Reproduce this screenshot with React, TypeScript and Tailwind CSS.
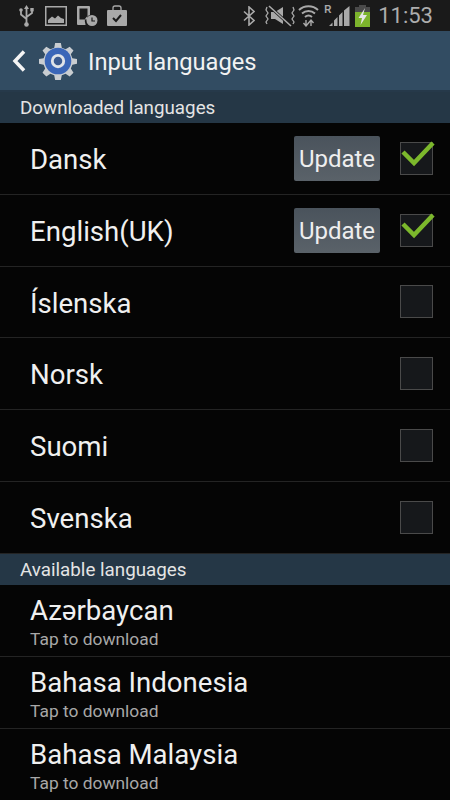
import React from 'react';

const downloaded = [
  { name: 'Dansk', update: true, checked: true },
  { name: 'English(UK)', update: true, checked: true },
  { name: 'Íslenska', update: false, checked: false },
  { name: 'Norsk', update: false, checked: false },
  { name: 'Suomi', update: false, checked: false },
  { name: 'Svenska', update: false, checked: false },
];

const available = ['Azərbaycan', 'Bahasa Indonesia', 'Bahasa Malaysia'];

function StatusBar() {
  return (
    <div className="flex h-[31px] items-center justify-between bg-[#1a1a1a] pl-[19px] pr-[17px]">
      <div className="flex items-center">
        {/* usb */}
        <svg width="15" height="22" viewBox="0 0 15 22" fill="none" stroke="#a9a9a9" strokeWidth="1.8">
          <path d="M7.500 2v17M2 6v3.500l5.500 4.500M13 5v3l-5.500 4" />
          <path d="M7.500 0l2.500 4H5z" fill="#a9a9a9" stroke="none" />
          <circle cx="7.500" cy="19.500" r="2.300" fill="#a9a9a9" stroke="none" />
          <circle cx="2" cy="5" r="1.800" fill="#a9a9a9" stroke="none" />
          <rect x="11.300" y="3" width="3.400" height="3.400" fill="#a9a9a9" stroke="none" />
        </svg>
        {/* picture */}
        <svg width="22" height="20" viewBox="0 0 22 20" className="ml-[11px]">
          <rect x="0.750" y="0.750" width="20.500" height="18.500" fill="none" stroke="#a9a9a9" strokeWidth="1.500" />
          <path d="M3 17v-3l4-3.500 3 2 3-3 3 2.500 3 1V17z" fill="#a9a9a9" />
        </svg>
        {/* phone with clock */}
        <svg width="21" height="20" viewBox="0 0 21 20" className="ml-[10px]">
          <path d="M1 0h11a1 1 0 0 1 1 1v8a6.500 6.500 0 0 0-4.500 9.500V19H1a1 1 0 0 1-1-1V1a1 1 0 0 1 1-1z M2.500 2.500v11h8v-11z" fill="#a9a9a9" fillRule="evenodd" />
          <circle cx="15" cy="14.500" r="5.500" fill="#a9a9a9" />
          <path d="M15 11.500v3.500h3" fill="none" stroke="#1a1a1a" strokeWidth="1.200" />
        </svg>
        {/* bag with check */}
        <svg width="20" height="21" viewBox="0 0 20 21" className="ml-[9px]">
          <path d="M6 5V3a2 2 0 0 1 2-2h4a2 2 0 0 1 2 2v2" fill="none" stroke="#a9a9a9" strokeWidth="1.300" />
          <rect x="0" y="5" width="20" height="16" rx="1" fill="#a9a9a9" />
          <path d="M6 13l3 3 5-6" fill="none" stroke="#1a1a1a" strokeWidth="2" />
        </svg>
      </div>
      <div className="flex items-center">
        {/* bluetooth */}
        <svg width="12" height="20" viewBox="0 0 12 20" fill="none" stroke="#a9a9a9" strokeWidth="1.600" className="mr-[10px]">
          <path d="M1 5.500l10 9-5 4.500V1l5 4.500-10 9" />
        </svg>
        {/* vibrate / mute */}
        <svg width="30" height="22" viewBox="0 0 30 22" fill="none" stroke="#a9a9a9" strokeWidth="1.300" className="mr-[3px]">
          <path d="M2 2l-1 3 2 3-2 3 2 3-2 3 1 2M28 2l1 3-2 3 2 3-2 3 2 3-1 2" />
          <path d="M6 7h4l8-5v17l-8-5H6z" fill="#a9a9a9" stroke="none" />
          <path d="M4 1l22 20" stroke="#1a1a1a" strokeWidth="3" />
          <path d="M4 1l22 20" strokeWidth="1.600" />
        </svg>
        {/* wifi */}
        <svg width="21" height="22" viewBox="0 0 21 22" fill="none" stroke="#a9a9a9" strokeWidth="2" className="mr-[5px]">
          <path d="M1 5a14 14 0 0 1 19 0M4 8.500a10 10 0 0 1 13 0M7 12a5.500 5.500 0 0 1 7 0" />
          <path d="M8 15v6M5.500 18l2.500 3 2.500-3M13 21v-6M10.500 18l2.500-3 2.500 3" strokeWidth="1.400" />
        </svg>
        {/* signal */}
        <div className="relative mr-[5px] h-[22px] w-[26px]">
          <span className="absolute left-0 top-[-1px] font-['Liberation_Sans',sans-serif] text-[10px] font-bold leading-[12px] text-[#a9a9a9]">
            R
          </span>
          <svg width="21" height="20" viewBox="0 0 21 20" className="absolute left-[5px] top-[1px]">
            <path d="M0 20l3.500-3.500V20zM5 20v-5.500L8.500 11v9zM10 20V9.500L13.500 6v14zM15 20V4.500L20.500 0v20z" fill="#a9a9a9" />
          </svg>
        </div>
        {/* battery */}
        <svg width="15" height="22" viewBox="0 0 15 22" className="mr-[8px]">
          <rect x="4" y="0" width="7" height="2" fill="#4a4a4a" />
          <rect x="0" y="2" width="15" height="5" fill="#4a4a4a" />
          <rect x="0" y="7" width="15" height="15" fill="#7cb32c" />
          <path d="M10 3L3.500 13h3.500l-1.500 7L12 10H8z" fill="#e6e6e6" />
        </svg>
        <span className="font-['Roboto',sans-serif] text-[22px] leading-[31px] text-[#adadad]">11:53</span>
      </div>
    </div>
  );
}

function ActionBar() {
  return (
    <div className="flex h-[61px] items-center border-b-2 border-[#26394a] bg-[#324c62] pl-[12px]">
      <svg width="14" height="24" viewBox="0 0 14 24" fill="none" stroke="#f4f4f4" strokeWidth="3.500">
        <path d="M12 2.500L3 12l9 9.500" />
      </svg>
      <svg width="38" height="38" viewBox="0 0 40 40" className="ml-[13px]">
        <path
          d="M17 1h6l1 5 4 1.700 4.300-2.800 4 4L33.500 13l1.600 4 4.900 1v5l-4.900 1-1.600 4 2.800 4.300-4 4-4.300-2.800-4 1.600-1 4.900h-6l-1-4.900-4-1.600-4.300 2.800-4-4L6.500 28l-1.600-4L0 23v-5l4.900-1 1.600-4-2.800-4.100 4-4L12 7.700l4-1.700z"
          fill="#c9cdd1"
        />
        <circle cx="20" cy="20" r="14" fill="#3a66b8" />
        <circle cx="20" cy="20" r="7.500" fill="#dfe3e8" />
        <circle cx="20" cy="20" r="4.500" fill="#3a5a90" />
      </svg>
      <span className="ml-[11px] pt-[4px] font-['Roboto',sans-serif] text-[23.700px] leading-none text-[#f2f2f2]">Input languages</span>
    </div>
  );
}

function SectionHeader({ title }: { title: string }) {
  return (
    <div className="flex h-[31px] items-center bg-[#253746] pl-[20px] pt-[2px] font-['Roboto',sans-serif] text-[18.800px] text-[#e4e4e4]">
      {title}
    </div>
  );
}

function Checkbox({ checked }: { checked: boolean }) {
  return (
    <div className="relative h-[33px] w-[33px] border border-[#4a4a4a] bg-[#16181b]">
      {checked && (
        <svg width="34" height="28" viewBox="0 0 34 28" fill="none" className="absolute left-[0px] top-[-3px]">
          <path d="M2 12l11 11L32 3" stroke="#7cb82c" strokeWidth="4.500" />
        </svg>
      )}
    </div>
  );
}

export default function App() {
  return (
    <div className="h-[800px] w-[450px] overflow-hidden bg-[#050505] font-['Roboto',sans-serif]">
      <StatusBar />
      <ActionBar />
      <SectionHeader title="Downloaded languages" />
      {downloaded.map((lang) => (
        <div key={lang.name} className="flex h-[71.750px] items-center border-b border-[#242424] pl-[30px] pr-[17px]">
          <span className="flex-1 pt-[3px] text-[27.600px] text-[#f0f0f0]">{lang.name}</span>
          {lang.update && (
            <button className="mr-[20px] h-[45px] w-[86px] rounded-[2px] bg-gradient-to-b from-[#4a535c] to-[#5a6269] pt-[2px] text-[24px] text-[#eeeeee]">
              Update
            </button>
          )}
          <Checkbox checked={lang.checked} />
        </div>
      ))}
      <SectionHeader title="Available languages" />
      {available.map((name) => (
        <div key={name} className="flex h-[72px] flex-col justify-center border-b border-[#242424] pl-[30px] pt-[4px]">
          <span className="text-[27.600px] leading-[32px] text-[#f0f0f0]">{name}</span>
          <span className="pt-[1px] text-[17.400px] leading-[22px] text-[#a8a8a8]">Tap to download</span>
        </div>
      ))}
    </div>
  );
}
